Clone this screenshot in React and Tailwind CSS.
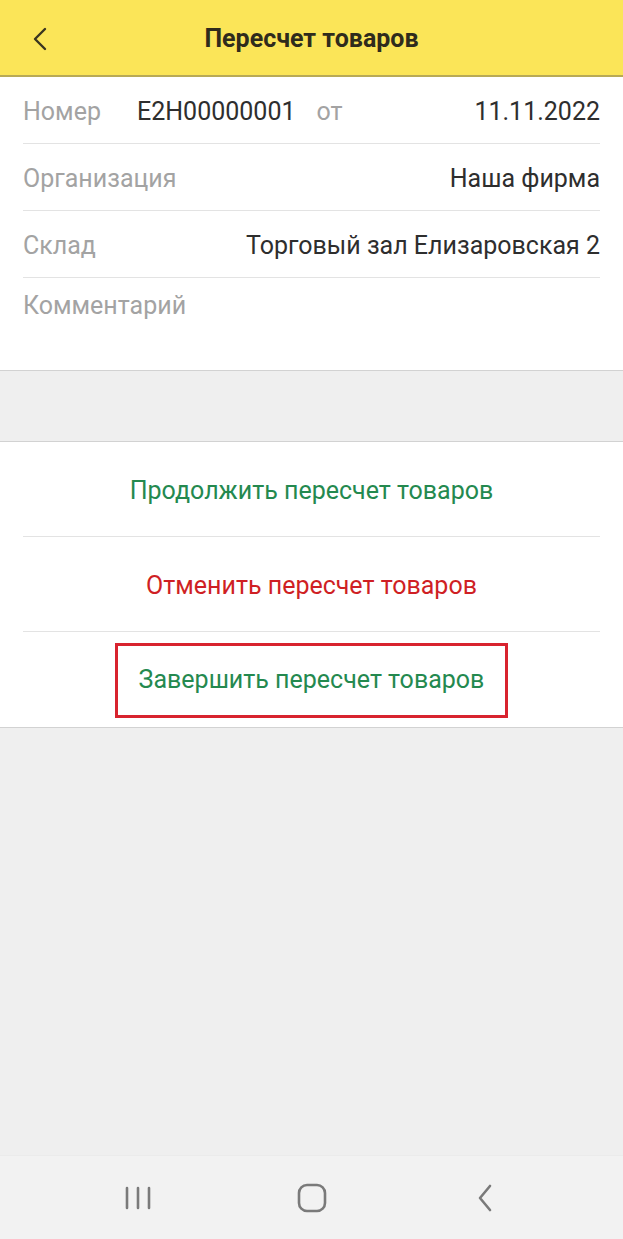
import React from "react";

const font = { fontFamily: "Roboto, 'Noto Sans', sans-serif" };

const Field = ({ label, children, last }) => (
  <div
    className={`flex items-center mx-[23px] h-[67px] pt-[3px] ${
      last ? "" : "border-b border-[#e3e3e3]"
    }`}
  >
    <span className="text-[#a3a3a3]">{label}</span>
    <div className="ml-auto text-[#2e2e2e]">{children}</div>
  </div>
);

const Action = ({ text, color, boxed, last }) => (
  <div
    className={`mx-[23px] h-[95px] flex items-center justify-center pt-[3px] ${
      last ? "" : "border-b border-[#e3e3e3]"
    }`}
  >
    <span
      className={
        boxed
          ? "border-[3px] border-[#d8232f] px-[21px] h-[75px] flex items-center -mt-[2px]"
          : ""
      }
      style={{ color }}
    >
      {text}
    </span>
  </div>
);

const App = () => {
  return (
    <div
      className="w-[623px] h-[1239px] bg-[#efefef] flex flex-col text-[25px] overflow-hidden"
      style={font}
    >
      {/* header */}
      <div className="h-[77px] bg-[#fbe558] border-b-2 border-[#b8aa56] flex items-center relative shrink-0">
        <svg
          className="absolute left-[32px] top-[27px]"
          width="16"
          height="24"
          viewBox="0 0 16 24"
          fill="none"
          stroke="#3a3520"
          strokeWidth="2.4"
          strokeLinecap="round"
          strokeLinejoin="round"
        >
          <path d="M13 2 L3 12 L13 22" />
        </svg>
        <div className="w-full text-center font-bold text-[25px] text-[#2f2b1c] pt-[3px]">
          Пересчет товаров
        </div>
      </div>

      {/* fields */}
      <div className="bg-white border-b border-[#d2d2d2] h-[294px] shrink-0">
        <div className="flex items-center mx-[23px] h-[67px] pt-[3px] border-b border-[#e3e3e3]">
          <span className="text-[#a3a3a3] w-[114px]">Номер</span>
          <span className="text-[#2e2e2e]">E2H00000001</span>
          <span className="text-[#a3a3a3] ml-[21px]">от</span>
          <span className="ml-auto text-[#2e2e2e]">11.11.2022</span>
        </div>
        <Field label="Организация">Наша фирма</Field>
        <Field label="Склад">Торговый зал Елизаровская 2</Field>
        <div className="mx-[23px] pt-[9px]">
          <span className="text-[#a3a3a3]">Комментарий</span>
        </div>
      </div>

      <div className="h-[70px] shrink-0" />

      {/* actions */}
      <div className="bg-white border-y border-[#d2d2d2] shrink-0">
        <Action text="Продолжить пересчет товаров" color="#24894f" />
        <Action text="Отменить пересчет товаров" color="#cf1f24" />
        <Action text="Завершить пересчет товаров" color="#24894f" boxed last />
      </div>

      <div className="flex-1" />

      {/* system nav bar */}
      <div className="h-[84px] bg-[#f2f2f2] border-t border-[#ebebeb] flex items-center px-[51px] shrink-0">
        <div className="flex-1 flex justify-center">
          <svg width="30" height="26" viewBox="0 0 30 26" fill="none" stroke="#7a7a7a" strokeWidth="2.6" strokeLinecap="round">
            <path d="M4 3 V23 M15 3 V23 M26 3 V23" />
          </svg>
        </div>
        <div className="flex-1 flex justify-center">
          <svg width="30" height="30" viewBox="0 0 30 30" fill="none" stroke="#7a7a7a" strokeWidth="2.6">
            <rect x="2" y="2" width="26" height="26" rx="8" />
          </svg>
        </div>
        <div className="flex-1 flex justify-center">
          <svg width="18" height="28" viewBox="0 0 18 28" fill="none" stroke="#7a7a7a" strokeWidth="2.6" strokeLinecap="round" strokeLinejoin="round">
            <path d="M14 2 L4 14 L14 26" />
          </svg>
        </div>
      </div>
    </div>
  );
};

export default App;
